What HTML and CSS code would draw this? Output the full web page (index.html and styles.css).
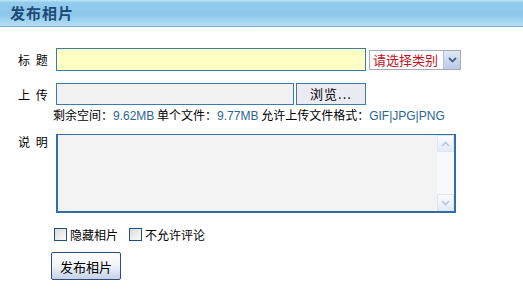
FILE: index.html
```html
<!DOCTYPE html>
<html lang="zh-CN">
<head>
  <meta charset="UTF-8" />
  <title>发布相片</title>
  <link rel="stylesheet" href="styles.css">
</head>
<body>

  <div class="header">发布相片</div>

  <form class="form">
    <div class="row row-title">
      <label class="label">标 题</label>
      <input class="input input-title" type="text">
      <div class="select">
        <span class="select-text">请选择类别</span>
        <span class="select-arrow">
          <svg width="9" height="6" viewBox="0 0 9 6"><path d="M1 1 L4.5 4.5 L8 1" fill="none" stroke="#4d6185" stroke-width="1.8"/></svg>
        </span>
      </div>
    </div>

    <div class="row row-upload">
      <label class="label">上 传</label>
      <input class="input input-file" type="text">
      <button class="browse" type="button">浏览...</button>
    </div>
    <div class="info">
      剩余空间：<span class="num">9.62MB</span> 单个文件：<span class="num">9.77MB</span> 允许上传文件格式：<span class="num">GIF|JPG|PNG</span>
    </div>

    <div class="row row-desc">
      <label class="label">说 明</label>
      <div class="textbox">
        <textarea class="textarea"></textarea>
        <div class="scrollbar">
          <span class="scroll-btn">
            <svg width="9" height="6" viewBox="0 0 9 6"><path d="M1 5 L4.5 1.5 L8 5" fill="none" stroke="#b7c6de" stroke-width="1.6"/></svg>
          </span>
          <span class="scroll-btn">
            <svg width="9" height="6" viewBox="0 0 9 6"><path d="M1 1 L4.5 4.5 L8 1" fill="none" stroke="#b7c6de" stroke-width="1.6"/></svg>
          </span>
        </div>
      </div>
    </div>

    <div class="checks">
      <label class="check"><span class="box"></span>隐藏相片</label>
      <label class="check"><span class="box"></span>不允许评论</label>
    </div>

    <button class="submit" type="button">发布相片</button>
  </form>

</body>
</html>
```

FILE: styles.css
```css
body {
  margin: 0;
  font-family: "Noto Sans CJK SC", "DejaVu Sans", sans-serif;
  font-size: 12px;
  color: #000;
  background: #fff;
}
.header {
  height: 26px;
  line-height: 26px;
  padding-left: 10px;
  font-size: 15px;
  font-weight: bold;
  letter-spacing: 1px;
  color: #1d4a77;
  background: linear-gradient(#b9e0f5 0, #b9e0f5 1px, #93cdee 2px, #8ac7ea 55%, #b6dff4 100%);
  border-bottom: 1px solid #7cb0d2;
}
.form {
  padding: 21px 0 0 0;
}
.row {
  display: flex;
  align-items: center;
}
.label {
  width: 56px;
  padding-left: 18px;
  box-sizing: border-box;
  flex: none;
  font-size: 12px;
  white-space: nowrap;
  word-spacing: 3px;
}
.input {
  box-sizing: border-box;
  border: 1px solid #3d7aae;
  padding: 0 3px;
  margin: 0;
  font: inherit;
  outline: none;
}
.input-title {
  width: 310px;
  height: 23px;
  background: #ffffc4;
}
.select {
  margin-left: 3px;
  width: 92px;
  height: 20px;
  box-sizing: border-box;
  border: 1px solid #a5acb5;
  display: flex;
  align-items: stretch;
  background: #fff;
}
.select-text {
  flex: 1;
  color: #c4111b;
  font-size: 13px;
  line-height: 18px;
  padding-left: 3px;
}
.select-arrow {
  width: 16px;
  display: flex;
  align-items: center;
  justify-content: center;
  background: linear-gradient(#dfe8f6, #b9cbe8);
  border-left: 1px solid #b1c0da;
}
.row-upload {
  margin-top: 12px;
}
.input-file {
  width: 238px;
  height: 22px;
  background: #f2f2f2;
}
.browse {
  margin-left: 2px;
  width: 70px;
  height: 22px;
  border: 1px solid #3d7aae;
  background: #ebebf2;
  font: inherit;
  font-size: 13px;
  line-height: 20px;
  letter-spacing: 1px;
  padding: 0;
}
.info {
  margin: 1px 0 0 53px;
  line-height: 17px;
  font-size: 12px;
}
.num {
  color: #2a6596;
  font-family: "Liberation Sans", sans-serif;
}
.row-desc {
  margin-top: 9px;
  align-items: flex-start;
}
.row-desc .label {
  line-height: 15px;
}
.textbox {
  width: 400px;
  height: 79px;
  box-sizing: border-box;
  border: 1px solid #2f6ea6;
  border-width: 1px 2px 2px 2px;
  display: flex;
  background: #f3f3f3;
}
.textarea {
  flex: 1;
  border: none;
  resize: none;
  background: transparent;
  outline: none;
  margin: 0;
}
.scrollbar {
  width: 17px;
  background: #f7f9fd;
  border-left: 1px solid #f0f2f7;
  display: flex;
  flex-direction: column;
  justify-content: space-between;
}
.scroll-btn {
  height: 17px;
  display: flex;
  align-items: center;
  justify-content: center;
  background: linear-gradient(#fbfcfe, #e4ebf7);
  border: 1px solid #dfe6f2;
  box-sizing: border-box;
}
.checks {
  display: flex;
  gap: 11px;
  margin: 14px 0 0 54px;
  line-height: 15px;
}
.check {
  display: flex;
  align-items: center;
  font-size: 12px;
}
.box {
  width: 13px;
  height: 13px;
  box-sizing: border-box;
  border: 1px solid #1c5180;
  background: linear-gradient(135deg, #dcdcd6, #fbfbf9);
  margin-right: 3px;
}
.submit {
  display: block;
  margin: 10px 0 0 51px;
  width: 70px;
  height: 28px;
  border: 1px solid #2d4d7c;
  border-radius: 2px;
  background: linear-gradient(#fefefe 0, #f0f3f8 50%, #c6d1e6 100%);
  font: inherit;
  font-size: 13px;
  padding: 0;
}
```
